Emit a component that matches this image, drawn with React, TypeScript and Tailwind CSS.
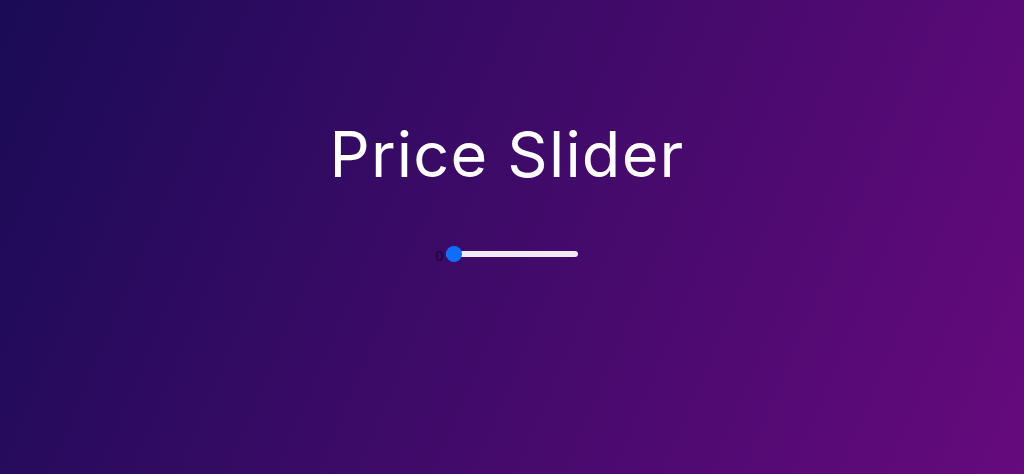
import React, { useState } from 'react';

export default function App() {
    const [price, setPrice] = useState(0);

    return (
        <div className="min-h-screen w-full bg-[linear-gradient(113deg,#1a0b56_0%,#660a7d_100%)] flex flex-col items-center pt-[112px] pr-[10px] font-['Inter',sans-serif]">
            <h1 className="text-[63px] leading-[84px] text-white font-normal tracking-[1.2px]">Price Slider</h1>

            {/* value readout + range input */}
            <div className="mt-[48px] flex items-center gap-[3px]">
                <span className="text-[14px] leading-none text-[#12062a] mt-[5px] font-['Liberation_Sans',sans-serif]">{price}</span>
                <input
                    type="range"
                    min={0}
                    max={100}
                    value={price}
                    onChange={(e) => setPrice(Number(e.target.value))}
                    className="w-[132px] h-[6px] appearance-none rounded-full bg-[#f1e9f6] outline-none cursor-pointer [&::-webkit-slider-thumb]:appearance-none [&::-webkit-slider-thumb]:w-[16px] [&::-webkit-slider-thumb]:h-[16px] [&::-webkit-slider-thumb]:rounded-full [&::-webkit-slider-thumb]:bg-[#0d6efd] [&::-moz-range-thumb]:w-[16px] [&::-moz-range-thumb]:h-[16px] [&::-moz-range-thumb]:rounded-full [&::-moz-range-thumb]:border-0 [&::-moz-range-thumb]:bg-[#0d6efd]"
                />
            </div>
        </div>
    );
}
